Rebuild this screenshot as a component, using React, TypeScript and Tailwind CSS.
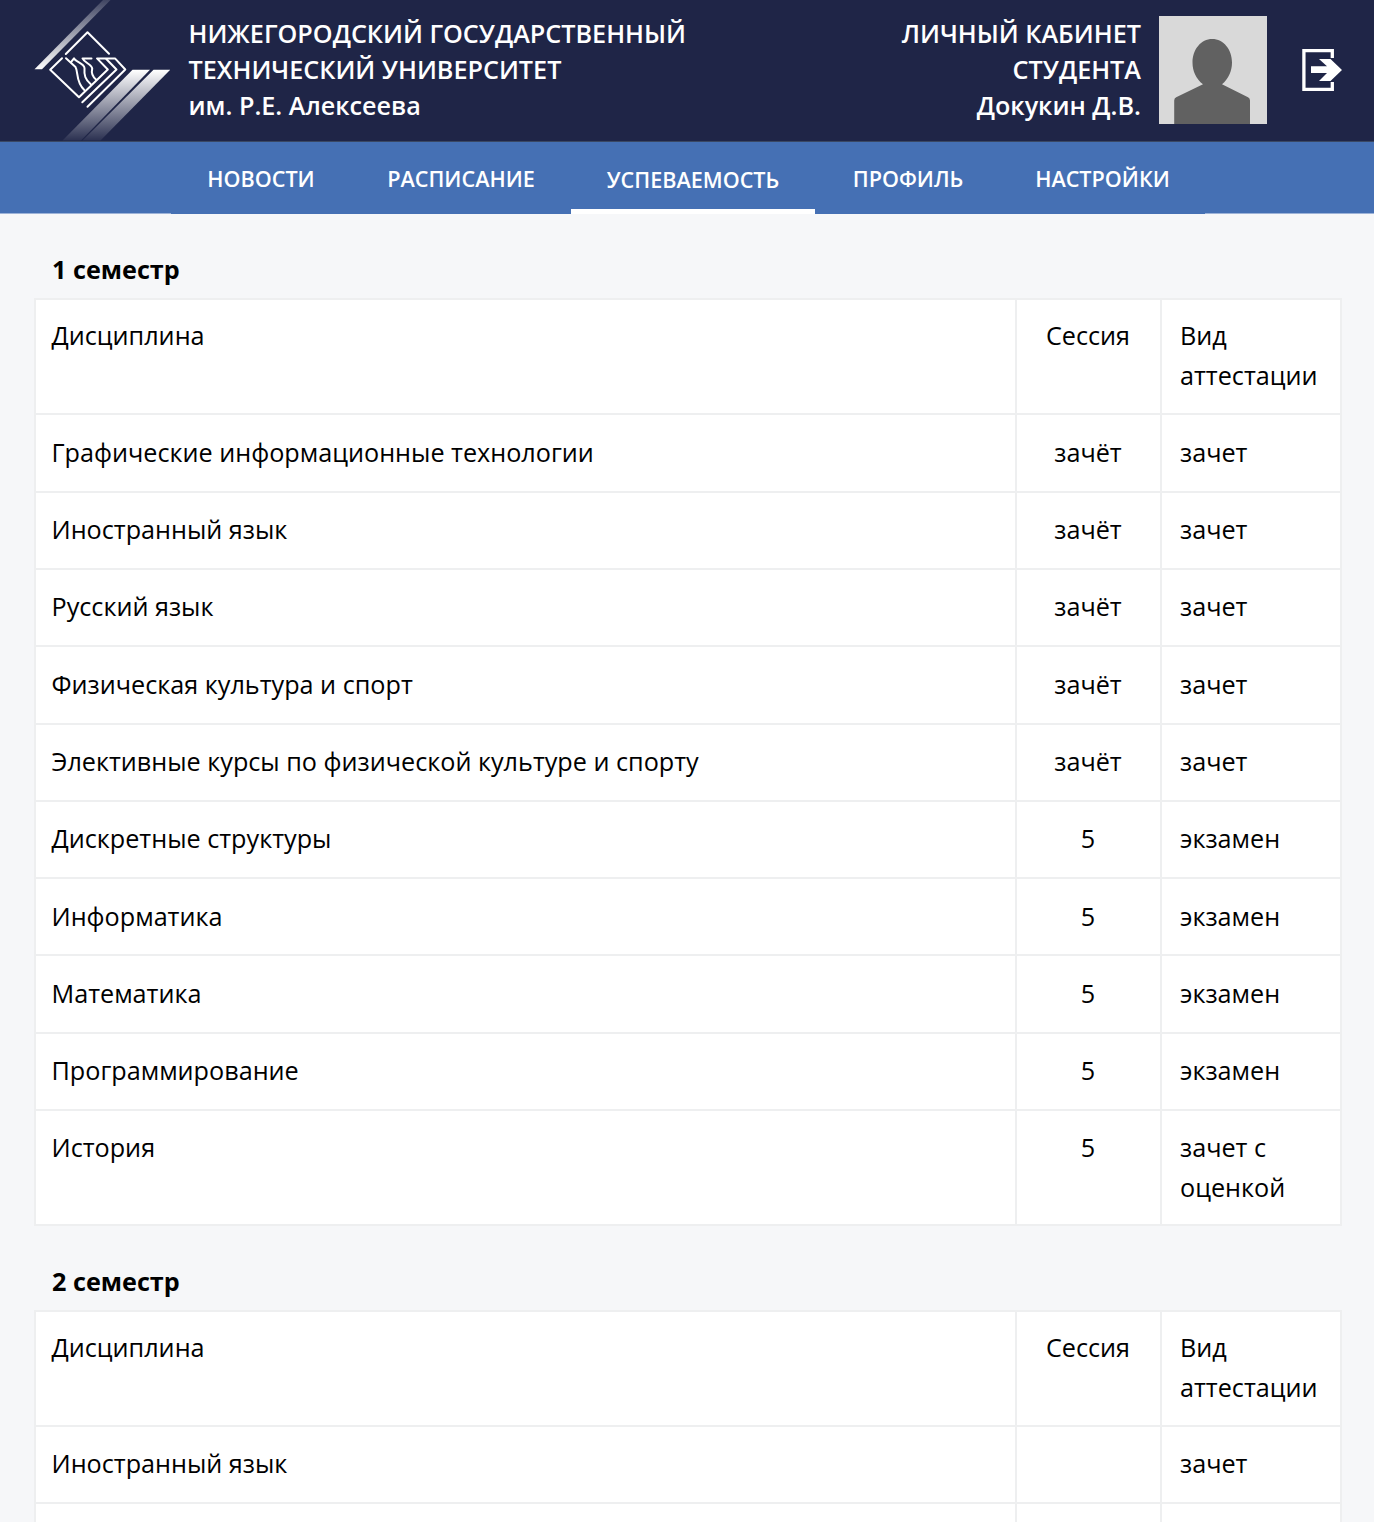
type Row = { name: string; mark: string; kind: string; h: string };

const HEAD = 'h-[115px] pt-[16px]';
const LAST = 'h-[115px] pt-[17px]';
const R77 = 'h-[77px] pt-[18px]';
const R77S = 'h-[77px] pt-[17px]';
const R78 = 'h-[78px] pt-[18px]';

const first: Row[] = [
  { name: 'Дисциплина', mark: 'Сессия', kind: 'Вид аттестации', h: HEAD },
  { name: 'Графические информационные технологии', mark: 'зачёт', kind: 'зачет', h: R78 },
  { name: 'Иностранный язык', mark: 'зачёт', kind: 'зачет', h: R77S },
  { name: 'Русский язык', mark: 'зачёт', kind: 'зачет', h: R77S },
  { name: 'Физическая культура и спорт', mark: 'зачёт', kind: 'зачет', h: R78 },
  { name: 'Элективные курсы по физической культуре и спорту', mark: 'зачёт', kind: 'зачет', h: R77S },
  { name: 'Дискретные структуры', mark: '5', kind: 'экзамен', h: R77S },
  { name: 'Информатика', mark: '5', kind: 'экзамен', h: R77 },
  { name: 'Математика', mark: '5', kind: 'экзамен', h: R78 },
  { name: 'Программирование', mark: '5', kind: 'экзамен', h: R77S },
  { name: 'История', mark: '5', kind: 'зачет с оценкой', h: LAST },
];

const second: Row[] = [
  { name: 'Дисциплина', mark: 'Сессия', kind: 'Вид аттестации', h: HEAD },
  { name: 'Иностранный язык', mark: '', kind: 'зачет', h: R77S },
  { name: '', mark: '', kind: '', h: R78 },
];

function Logo() {
  return (
    <svg className="block h-[141px] w-[136px] shrink-0" viewBox="34 0 136 141" fill="none">
      <defs>
        <linearGradient id="beamTop" gradientUnits="userSpaceOnUse" x1="0" y1="70" x2="0" y2="-4">
          <stop offset="0" stopColor="#fff" />
          <stop offset="1" stopColor="#fff" stopOpacity="0.1" />
        </linearGradient>
        <linearGradient id="beamBottom" gradientUnits="userSpaceOnUse" x1="0" y1="70" x2="0" y2="141">
          <stop offset="0" stopColor="#fff" />
          <stop offset="1" stopColor="#fff" stopOpacity="0.05" />
        </linearGradient>
      </defs>
      <path d="M34.5 69.3H42L110.5 0H103Z" fill="url(#beamTop)" />
      <path d="M132.5 69.8H150L81 140.5H62.5Z" fill="url(#beamBottom)" />
      <path d="M153.5 69.8H170.3L100.5 140.5H82.5Z" fill="url(#beamBottom)" />
      <g stroke="#fff" strokeWidth="2" strokeLinejoin="round" strokeLinecap="round">
        <path d="M65.8 54L87.5 32.200L109 53.800" />
        <path d="M62 58.300L50.200 69.800L79 97.300L107.800 69.500L97 58.400H115L125.300 69.500L87.500 106.700" />
        <path d="M82.300 102.300L116.500 69.500L106.300 59" />
        <path d="M66 58.300L75.500 67C78.500 72 75.500 82 84.300 90" />
        <path d="M71 62.200L74 58.400C75.200 61.800 84 63.200 84.500 68C84 75 85 79.500 91 84.500" />
        <path d="M91.500 58.400H82.500C84.500 63 91.500 64 92.200 68.500C91 73.500 92.500 76.500 96 79.500" />
      </g>
    </svg>
  );
}

function Avatar() {
  return (
    <svg className="ml-[18px] block size-[108px] shrink-0" viewBox="0 0 108 108">
      <rect width="108" height="108" fill="#d9d9d9" />
      <path
        d="M53.200 23C64.500 23 73 33.500 73 46.500C73 55 69.500 63 63 68.300L89 81.300Q91 82.300 91 84.500V108H15.200V84.500Q15.200 82.300 17.200 81.300L44 68.300C37 63 33.500 55 33.500 46.500C33.500 33.500 42 23 53.200 23Z"
        fill="#616161"
      />
    </svg>
  );
}

function ExitIcon() {
  return (
    <svg className="mr-8 ml-[35px] block h-[42px] w-10 shrink-0" viewBox="1302 49 40 42" fill="none">
      <path d="M1332.300 58V50.700H1303.900V89.300H1332.300V82" stroke="#fff" strokeWidth="3.300" />
      <path d="M1311 66.300H1327L1319 59H1330.500L1342 70L1330.500 81H1319L1327 73H1311Z" fill="#fff" />
    </svg>
  );
}

function Table({ title, rows }: { title: string; rows: Row[] }) {
  return (
    <section>
      <h2 className="h-[84px] pt-[35px] pl-[52px] leading-[40px] font-bold">{title}</h2>
      <div className="mr-[32px] ml-[34px] border-2 border-b-0 border-[#eeeff0] bg-white">
        {rows.map((r, i) => (
          <div key={i} className="grid grid-cols-[979px_147px_1fr] border-b-2 border-[#eeeff0] leading-[39.6px]">
            <div className={`pl-[15.5px] ${r.h} -mb-[2px]`}>{r.name}</div>
            <div className={`border-x-2 border-[#eeeff0] pr-px text-center ${r.h} -mb-[2px]`}>{r.mark}</div>
            <div className={`pr-4 pl-[18px] ${r.h} -mb-[2px]`}>{r.kind}</div>
          </div>
        ))}
      </div>
    </section>
  );
}

export default function App() {
  return (
    <div className="h-[1522px] overflow-hidden bg-[#f6f7f9] font-['Open_Sans','Noto_Sans',sans-serif] text-[25.2px] text-black">
      <header className="flex h-[142px] items-start border-b border-[#3a4863] bg-[#1f2547] pl-[34px] leading-9 font-semibold text-white">
        <Logo />
        <div className="ml-[18.5px] pt-[15px] whitespace-nowrap">
          НИЖЕГОРОДСКИЙ ГОСУДАРСТВЕННЫЙ
          <br />
          ТЕХНИЧЕСКИЙ УНИВЕРСИТЕТ
          <br />
          им. Р.Е. Алексеева
        </div>
        <div className="ml-auto pt-[15px] text-right whitespace-nowrap">
          ЛИЧНЫЙ КАБИНЕТ
          <br />
          СТУДЕНТА
          <br />
          Докукин Д.В.
        </div>
        <div className="flex h-[140px] items-center">
          <Avatar />
          <ExitIcon />
        </div>
      </header>
      <nav className="flex h-[72px] bg-[#4570b4] text-[21.6px] leading-[74px] font-semibold text-white">
        <span className="w-[171px] border-b border-[#9db3d8]" />
        <a className="w-[180px] text-center">НОВОСТИ</a>
        <a className="w-[220px] text-center">РАСПИСАНИЕ</a>
        <a className="w-[244px] border-b-[5px] border-white text-center leading-[76px]">УСПЕВАЕМОСТЬ</a>
        <a className="w-[186px] text-center">ПРОФИЛЬ</a>
        <a className="w-[204px] pr-px text-center">НАСТРОЙКИ</a>
        <span className="flex-1 border-b border-[#9db3d8]" />
      </nav>
      <main>
        <Table title="1 семестр" rows={first} />
        <Table title="2 семестр" rows={second} />
      </main>
    </div>
  );
}
